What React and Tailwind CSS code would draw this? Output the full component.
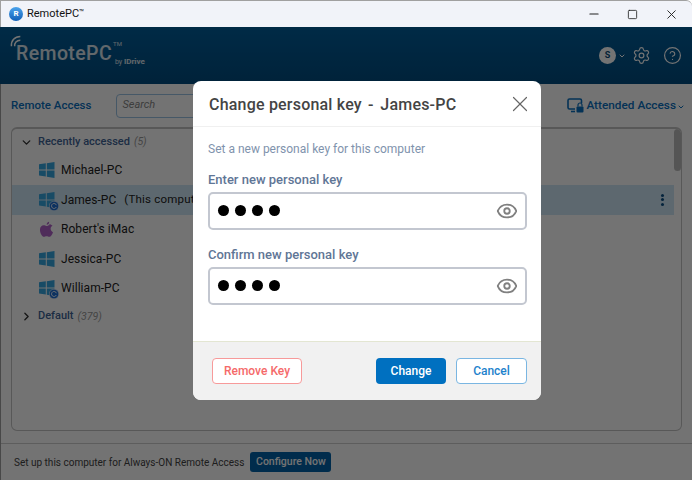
import { useState } from "react";
import { Eye, Settings, CircleHelp, X, Minus, Square, ChevronDown, ChevronRight } from "lucide-react";

const font = { fontFamily: "Roboto, sans-serif" };

// Windows four-pane logo
function WinIcon({ sync }) {
  return (
    <span className="relative block w-[16px] h-[16px] shrink-0">
      <svg viewBox="0 0 16 16" className="w-[16px] h-[16px]">
        <path d="M0 2.300 6.800 1.300V7.500H0Z M7.800 1.200 15.500 0V7.500H7.800Z M0 8.500H6.800V14.600L0 13.600Z M7.800 8.500H15.500V16L7.800 14.800Z" fill="#37a6e0" />
      </svg>
      {sync && (
        <svg viewBox="0 0 10 10" className="absolute right-[-4px] bottom-[-3px] w-[10px] h-[10px]">
          <circle cx="5" cy="5" r="4.800" fill="#1d6fd6" stroke="#fff" strokeWidth="0.6" />
          <path d="M7.400 4.200A2.500 2.500 0 1 0 7.300 6" fill="none" stroke="#fff" strokeWidth="0.9" />
        </svg>
      )}
    </span>
  );
}

function AppleIcon() {
  return (
    <svg viewBox="0 0 16 18" className="w-[15px] h-[17px] shrink-0">
      <path
        d="M11 4.400c-1.200 0-2 .8-3 .8S6.200 4.500 5 4.500C3 4.500 1 6.200 1 9.200c0 3.400 2.300 7.600 4.300 7.600 1 0 1.500-.7 2.800-.7s1.700.7 2.800.7c1.800 0 3.500-3.100 4-5-1.500-.6-2.500-1.900-2.500-3.500 0-1.400.8-2.600 2-3.200-.8-1.100-2-1.700-3.400-1.700zM10.800 0.600C9.400.8 8 2.200 8.200 3.900c1.500 0 2.900-1.500 2.600-3.300z"
        fill="#b062c8"
      />
    </svg>
  );
}

// Monitor with padlock, used by the Attended Access menu
function AttendedIcon() {
  return (
    <svg viewBox="0 0 17 15" className="w-[17px] h-[15px]" fill="none">
      <path d="M8 11H2.500A1.500 1.500 0 0 1 1 9.500V2.500A1.500 1.500 0 0 1 2.500 1H13A1.500 1.500 0 0 1 14.500 2.500V5" stroke="#0a6fbe" strokeWidth="1.600" />
      <path d="M4 13.500H8" stroke="#0a6fbe" strokeWidth="1.600" />
      <rect x="9.500" y="8.500" width="7" height="6" rx="1" fill="#0a6fbe" />
      <path d="M11 8.500V7a2 2 0 0 1 4 0v1.500" stroke="#0a6fbe" strokeWidth="1.200" />
    </svg>
  );
}

function Row({ icon, name, note, active }) {
  return (
    <div className={`flex items-center h-[29.5px] pl-[27px] mr-[7px] pr-[10px] ${active ? "bg-[#cfe6f5]" : ""}`}>
      <span className="w-[22px] flex">{icon}</span>
      <span className="text-[12px] tracking-[0.05px] text-[#222]">{name}</span>
      {note && <span className="text-[11.5px] tracking-[0.2px] text-[#222] ml-[8px] whitespace-nowrap">{note}</span>}
      {active && (
        <span className="ml-auto flex flex-col gap-[1.5px]">
          <i className="block w-[3px] h-[3px] rounded-full bg-[#0a4f86]" />
          <i className="block w-[3px] h-[3px] rounded-full bg-[#0a4f86]" />
          <i className="block w-[3px] h-[3px] rounded-full bg-[#0a4f86]" />
        </span>
      )}
    </div>
  );
}

function KeyField({ label, className }) {
  const [show, setShow] = useState(false);
  return (
    <div className={className}>
      <div className="text-[13px] font-medium text-[#5f7696] leading-[15px]">{label}</div>
      <div className="mt-[5px] h-[38px] rounded-[5px] border-2 border-[#c3c7d0] flex items-center pl-[8px] pr-[7px]">
        <span className="flex gap-[6px] mb-[1px]">
          {[0, 1, 2, 3].map((i) => (
            <i key={i} className="block w-[11px] h-[11px] rounded-full bg-black" />
          ))}
        </span>
        <button onClick={() => setShow(!show)} className="ml-auto text-[#808080]">
          <Eye size={22} strokeWidth={2} />
        </button>
      </div>
    </div>
  );
}

export default function App() {
  return (
    <div className="relative w-[692px] h-[480px] overflow-hidden bg-white flex flex-col" style={font}>
      {/* Title bar */}
      <div className="h-[27px] shrink-0 bg-[#f1f3f9] border-t border-l border-[#a0a0a0] rounded-tr-[6px] flex items-center">
        <span className="ml-[8px] w-[14px] h-[14px] rounded-full bg-gradient-to-b from-[#4aa3ec] to-[#0f5fb8] text-white text-[8px] font-bold flex items-center justify-center">R</span>
        <span className="ml-[4px] text-[11px] text-[#111]">RemotePC<span className="text-[8px] align-[2px]">™</span></span>
        <div className="ml-auto flex items-center text-[#222]">
          <span className="w-[38px] flex justify-center"><Minus size={14} /></span>
          <span className="w-[38px] flex justify-center"><Square size={11} strokeWidth={1.8} /></span>
          <span className="w-[41px] flex justify-center"><X size={15} strokeWidth={1.5} /></span>
        </div>
      </div>

      {/* Brand header */}
      <div className="h-[57px] shrink-0 bg-gradient-to-b from-[#015f9c] to-[#014c80] flex items-center pl-[10px] pr-[10px]">
        <div className="relative flex items-end text-white/85 h-[24px] mb-[3px]">
          <svg viewBox="0 0 16 16" className="absolute left-0 top-[-7px] w-[15px] h-[15px]" fill="none" stroke="#fff" strokeWidth="1.600">
            <path d="M1.500 12C1 6 5 1.500 11 1.500" />
            <path d="M5 12C4.500 8.500 7 5.500 11 5.500" />
          </svg>
          <span className="ml-[6px] text-[19.5px] font-medium leading-[24px] tracking-[0.4px]">RemotePC</span>
          <span className="text-[6px] self-start mt-[-3px] ml-[1px]">TM</span>
          <span className="text-[7px] ml-[-7px] mb-[-2px] whitespace-nowrap">by <b className="text-[8px]">IDrive</b></span>
        </div>
        <div className="ml-auto flex items-center text-white">
          <span className="w-[17px] h-[17px] rounded-full bg-white text-[#0a4a7a] text-[9px] font-bold flex items-center justify-center">S</span>
          <ChevronDown size={8} strokeWidth={3} className="ml-[2px]" />
          <Settings size={19} strokeWidth={1.500} className="ml-[6px]" />
          <CircleHelp size={19} strokeWidth={1.500} className="ml-[12px]" />
        </div>
      </div>

      {/* Main */}
      <div className="flex-1 min-h-0 flex flex-col bg-white border-l border-[#a0a0a0]">
        <div className="h-[43px] shrink-0 flex items-center pl-[10px] pr-[7px]">
          <span className="text-[11.5px] font-medium text-[#0a6fbe]">Remote Access</span>
          <div className="ml-[25px] w-[160px] h-[24px] rounded-[4px] border border-[#9cc4e4] pl-[5px] flex items-center text-[11px] italic text-[#888]">Search</div>
          <div className="ml-auto flex items-center text-[#0a6fbe]">
            <AttendedIcon />
            <span className="text-[11.8px] font-medium ml-[2px]">Attended Access</span>
            <ChevronDown size={8} strokeWidth={3} className="ml-[1px] mt-[3px]" />
          </div>
        </div>

        <div className="ml-[10px] mr-[10px] h-[304px] shrink-0 rounded-[6px] border border-[#c4c4c4] border-t-2 relative overflow-hidden">
          <div className="flex items-center h-[26.5px] pl-[8px]">
            <ChevronDown size={13} strokeWidth={2.5} className="text-[#333]" />
            <span className="ml-[5px] text-[11px] font-medium text-[#3f6496]">Recently accessed</span>
            <span className="ml-[4px] text-[10.5px] italic text-[#999]">(5)</span>
          </div>
          <Row icon={<WinIcon />} name="Michael-PC" />
          <Row icon={<WinIcon sync />} name="James-PC" note="(This computer)" active />
          <Row icon={<AppleIcon />} name="Robert's iMac" />
          <Row icon={<WinIcon />} name="Jessica-PC" />
          <Row icon={<WinIcon sync />} name="William-PC" />
          <div className="flex items-center h-[27px] pl-[8px]">
            <ChevronRight size={13} strokeWidth={2.5} className="text-[#333]" />
            <span className="ml-[5px] text-[11px] font-medium text-[#3f6496]">Default</span>
            <span className="ml-[4px] text-[10.5px] italic text-[#999]">(379)</span>
          </div>
          {/* Scrollbar thumb */}
          <span className="absolute right-0 top-0 w-[7px] h-[42px] rounded-[4px] bg-[#bdbdbd]" />
        </div>

        <div className="mt-auto h-[37px] shrink-0 border-t border-[#cfcfcf] bg-white flex items-center pl-[13px]">
          <span className="text-[10px] text-[#444]">Set up this computer for Always-ON Remote Access</span>
          <span className="ml-[6px] h-[20px] w-[81px] rounded-[3px] bg-[#0062a8] text-white text-[10.5px] font-medium flex items-center justify-center">Configure Now</span>
        </div>
      </div>

      {/* Dimmed backdrop with dialog */}
      <div className="absolute left-0 right-0 top-[27px] bottom-0 bg-black/55 pt-[54px] pl-[193px]">
        <div className="w-[348px] h-[319px] rounded-[8px] bg-white flex flex-col overflow-hidden">
          <div className="h-[46px] shrink-0 border-b border-[#f0f0f0] flex items-center pt-[2px] pl-[16px] pr-[8px]">
            <span className="text-[16px] font-medium text-[#444] tracking-[0.2px]">Change personal key</span>
            <span className="text-[16px] font-medium text-[#444] ml-[6px]">-</span>
            <span className="text-[16px] font-medium text-[#444] tracking-[0.2px] ml-[7px]">James-PC</span>
            <X size={26} strokeWidth={1.100} className="ml-auto text-[#666] mt-[-2px]" />
          </div>
          <div className="flex-1 pl-[15px] pr-[14px] pt-[15px]">
            <div className="text-[12px] text-[#7f93ad] leading-[15px]">Set a new personal key for this computer</div>
            <KeyField label="Enter new personal key" className="mt-[15px]" />
            <KeyField label="Confirm new personal key" className="mt-[17px]" />
          </div>
          <div className="h-[59px] shrink-0 bg-[#f1f1f1] border-t border-[#e3e6d2] flex items-center pl-[19px] pr-[14px]">
            <button className="h-[26px] w-[90px] rounded-[4px] bg-white border-[1.5px] border-[#f79a9a] text-[12px] font-medium text-[#f56a6a]">Remove Key</button>
            <button className="ml-auto h-[26px] w-[70px] rounded-[4px] bg-[#0070c0] text-white text-[12px] font-medium">Change</button>
            <button className="ml-[10px] h-[26px] w-[71px] rounded-[4px] bg-white border-[1.5px] border-[#7ab6e2] text-[#1e82cc] text-[12px] font-medium">Cancel</button>
          </div>
        </div>
      </div>
    </div>
  );
}
